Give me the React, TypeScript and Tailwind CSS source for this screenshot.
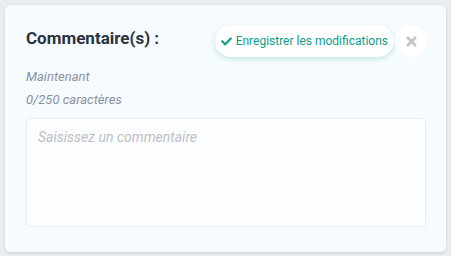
import { FaCheck, FaTimes } from "react-icons/fa";

export default function App() {
  return (
    <div className="h-[256px] w-[451px] bg-[#e9edf0] p-[5px] font-['Roboto',sans-serif]">
      <div className="flex h-[247px] w-[441px] flex-col rounded-[5px] bg-[#f5fbfe] pl-[21px] pr-[19px] pt-[20px] shadow-[0_1px_3px_rgba(0,0,0,0.12)]">
        <div className="flex items-start justify-between">
          <h2 className="mt-[3px] text-[17px] font-bold leading-[20px] text-[#2b3240]">Commentaire(s) :</h2>
          <div className="flex items-center gap-[1px]">
            <button className="flex h-[32px] items-center gap-[4px] rounded-full bg-white pl-[6px] pr-[6px] text-[12px] text-[#0e9c87] shadow-[0_2px_5px_rgba(14,156,135,0.22)]">
              <FaCheck className="h-[11px] w-[11px]" />
              Enregistrer les modifications
            </button>
            <button className="flex h-[32px] w-[32px] items-center justify-center rounded-full bg-white text-[#c4c4c4]">
              <FaTimes className="h-[15px] w-[11px]" />
            </button>
          </div>
        </div>
        <p className="mt-[10px] text-[13px] italic leading-[20px] text-[#8d9198]">Maintenant</p>
        <p className="mt-[3px] text-[13px] italic leading-[20px] text-[#8d9198]">0/250 caractères</p>
        <textarea
          placeholder="Saisissez un commentaire"
          className="mt-[8px] h-[109px] w-[400px] resize-none rounded-[4px] border border-[#e6eef2] bg-[#fcfdff] px-[11px] py-[8px] text-[14px] italic text-[#333] outline-none placeholder:text-[#bcc0c5]"
        />
      </div>
    </div>
  );
}
